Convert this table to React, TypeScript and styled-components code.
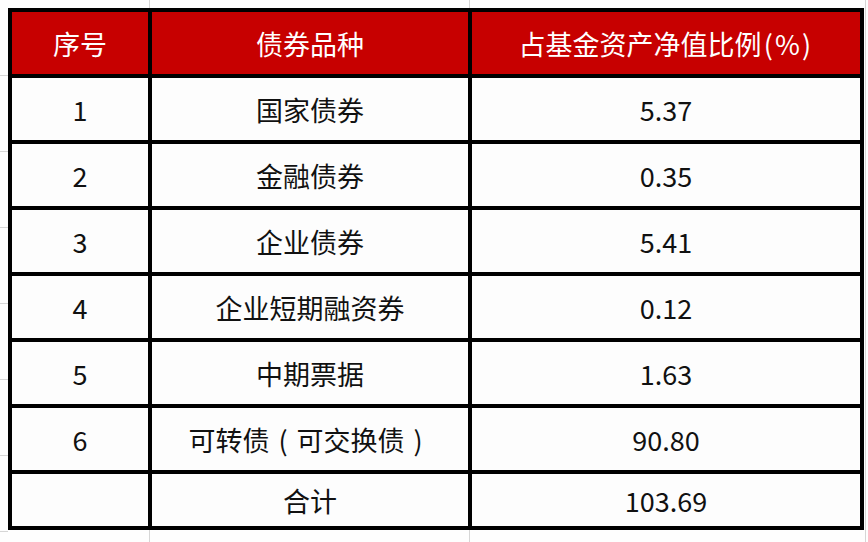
import React from "react";
import styled, { createGlobalStyle } from "styled-components";

const GlobalStyle = createGlobalStyle`
  html, body {
    margin: 0;
    padding: 0;
    background: #fefefe;
  }
  body {
    font-family: "Noto Sans CJK SC", "Noto Sans", sans-serif;
  }
`;

const Sheet = styled.div`
  width: 868px;
  height: 542px;
  box-sizing: border-box;
  padding: 8px 0 0 8px;
  background-color: #fefefe;
  background-image:
    linear-gradient(to right, transparent 149px, #d6d6d6 149px, #d6d6d6 150px, transparent 150px),
    linear-gradient(to right, transparent 469px, #d6d6d6 469px, #d6d6d6 470px, transparent 470px),
    linear-gradient(to right, transparent 865px, #d6d6d6 865px, #d6d6d6 866px, transparent 866px),
    repeating-linear-gradient(to bottom, transparent 0, transparent 75px, #d6d6d6 75px, #d6d6d6 76px, transparent 76px, transparent 66px);
  background-size: 100% 100%, 100% 100%, 100% 100%, 8px 100%;
  background-repeat: no-repeat;
  overflow: hidden;
`;

const Table = styled.div`
  display: grid;
  grid-template-columns: 136px 316px 388px;
  grid-template-rows: repeat(7, 62px) 52px;
  gap: 4px;
  padding: 4px;
  width: max-content;
  background: #000;
`;

const Cell = styled.div<{ $head?: boolean }>`
  display: flex;
  align-items: center;
  justify-content: center;
  background: ${(p) => (p.$head ? "#c70000" : "#fdfdfd")};
  color: ${(p) => (p.$head ? "#ffffff" : "#111111")};
  font-size: 27px;
  line-height: 1;
  white-space: nowrap;
`;

// full-width brackets sit centred in their em box, as in the source sheet
const Paren = styled.span<{ $w?: string }>`
  display: inline-block;
  width: ${(p) => p.$w ?? "1em"};
  text-align: center;
`;

const headers: React.ReactNode[] = [
  "序号",
  "债券品种",
  <>
    占基金资产净值比例<Paren $w="0.5em">(</Paren>%<Paren $w="0.5em">)</Paren>
  </>,
];

const rows: [string, React.ReactNode, string][] = [
  ["1", "国家债券", "5.37"],
  ["2", "金融债券", "0.35"],
  ["3", "企业债券", "5.41"],
  ["4", "企业短期融资券", "0.12"],
  ["5", "中期票据", "1.63"],
  [
    "6",
    <>
      可转债<Paren>(</Paren>可交换债<Paren>)</Paren>
    </>,
    "90.80",
  ],
  ["", "合计", "103.69"],
];

export default function App() {
  return (
    <>
      <GlobalStyle />
      <Sheet>
        <Table>
          {headers.map((h, i) => (
            <Cell key={`h${i}`} $head>
              {h}
            </Cell>
          ))}
          {rows.map((r, i) =>
            r.map((c, j) => <Cell key={`${i}-${j}`}>{c}</Cell>)
          )}
        </Table>
      </Sheet>
    </>
  );
}
